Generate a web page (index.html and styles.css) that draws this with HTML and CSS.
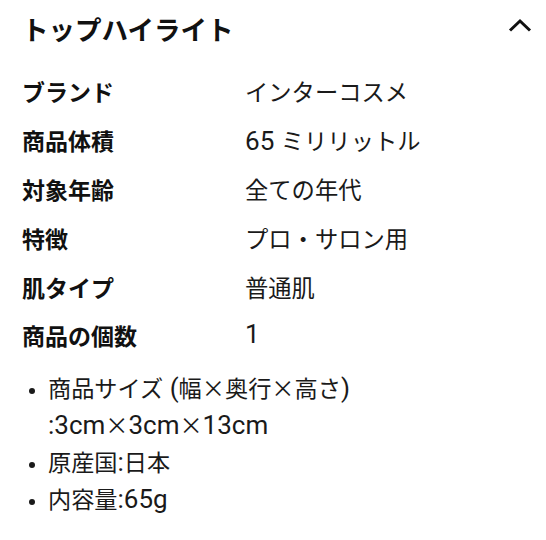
FILE: index.html
```html
<!DOCTYPE html>
<html lang="ja">
<head>
<meta charset="utf-8">
<link rel="stylesheet" href="styles.css">
</head>
<body>
<section class="panel">
  <header class="head">
    <h2 class="title">トップハイライト</h2>
    <svg class="chev" width="26" height="15" viewBox="0 0 26 15"><path d="M3 12.5 L13 3 L23 12.5" fill="none" stroke="#111" stroke-width="3"/></svg>
  </header>
  <div class="specs">
    <div class="row"><span class="label">ブランド</span><span class="value">インターコスメ</span></div>
    <div class="row"><span class="label">商品体積</span><span class="value"><span class="lat">65 </span>ミリリットル</span></div>
    <div class="row"><span class="label">対象年齢</span><span class="value">全ての年代</span></div>
    <div class="row"><span class="label">特徴</span><span class="value">プロ・サロン用</span></div>
    <div class="row"><span class="label">肌タイプ</span><span class="value">普通肌</span></div>
    <div class="row"><span class="label">商品の個数</span><span class="value"><span class="lat">1</span></span></div>
  </div>
  <ul class="bullets">
    <li>商品サイズ<span class="lat"> (</span>幅<span class="x">×</span>奥行<span class="x">×</span>高さ<span class="lat">)</span><br><span class="lat">:3cm</span><span class="x">×</span><span class="lat">3cm</span><span class="x">×</span><span class="lat">13cm</span></li>
    <li>原産国<span class="lat">:</span>日本</li>
    <li>内容量<span class="lat">:65g</span></li>
  </ul>
</section>
</body>
</html>
```
FILE: styles.css
```css
html, body {
  margin: 0;
  padding: 0;
  background: #fff;
}
body {
  font-family: Roboto, "Noto Sans CJK JP", sans-serif;
  color: #111;
}
.panel {
  padding: 12px 13px 0 22px;
}
.head {
  display: flex;
  align-items: center;
  justify-content: space-between;
  height: 38px;
}
.title {
  margin: 0;
  font-size: 26.5px;
  line-height: 38px;
  font-weight: 700;
  color: #111;
}
.chev {
  display: block;
  margin-top: -12px;
}
.specs {
  margin-top: 17px;
}
.row {
  display: flex;
  align-items: center;
  height: 48.8px;
}
.label {
  width: 223px;
  flex: none;
  font-size: 23px;
  font-weight: 700;
  color: #111;
}
.value {
  font-size: 23.3px;
  color: #1a1a1a;
}
.bullets {
  margin: 10px 0 0 0;
  padding: 0 0 0 26px;
  font-size: 23.2px;
  line-height: 35px;
  color: #1a1a1a;
}
.bullets li {
  margin-bottom: 2px;
}
.bullets li::marker {
  font-size: 20px;
}
.lat {
  font-family: Roboto, sans-serif;
  font-size: 1.12em;
  line-height: 1;
}
.x {
  font-family: "Noto Sans CJK JP", sans-serif;
}
```
